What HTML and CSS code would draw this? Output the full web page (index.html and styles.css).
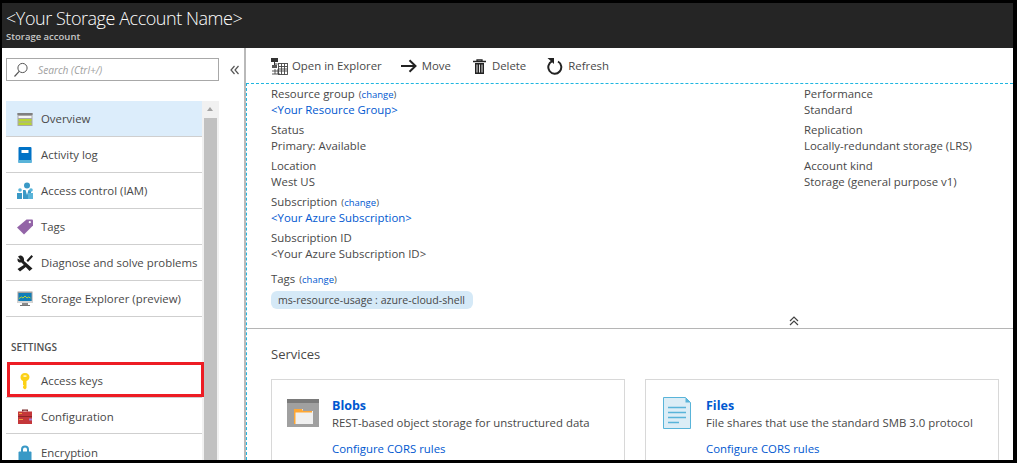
FILE: index.html
```html
<!DOCTYPE html>
<html lang="en">
<head>
    <meta charset="UTF-8">
    <title>Storage account</title>
    <link rel="stylesheet" href="styles.css">
</head>
<body>
    <div class="app">
        <header class="blade-header">
            <h1>&lt;Your Storage Account Name&gt;</h1>
            <div class="blade-type">Storage account</div>
        </header>
        <div class="blade-body">
            <aside class="sidebar">
                <div class="search-row">
                    <div class="search-box">
                        <svg class="search-icon" width="16" height="16" viewBox="0 0 16 16"><circle cx="9.5" cy="6" r="4.6" fill="none" stroke="#555" stroke-width="1"/><path d="M6.2 9.4 1.5 14.5" stroke="#555" stroke-width="1.2"/></svg>
                        <span>Search (Ctrl+/)</span>
                    </div>
                    <svg class="collapse" width="10" height="10" viewBox="0 0 10 10"><path d="M4.5 1 1 5l3.5 4M8.5 1 5 5l3.5 4" fill="none" stroke="#555" stroke-width="1.2"/></svg>
                </div>
                <div class="menu-wrap">
                    <nav class="menu">
                        <a class="menu-item active">
                            <svg width="18" height="18" viewBox="0 0 18 18"><rect x="1.500" y="3" width="15" height="13" fill="#a8a8a8"/><rect x="1.500" y="3" width="15" height="2" fill="#7f7f7f"/><rect x="2.500" y="6" width="13" height="2" fill="#f4f4f4"/><rect x="2.500" y="9" width="13" height="2.500" fill="#b8d432"/><rect x="2.500" y="12.500" width="13" height="2.500" fill="#b8d432"/></svg>
                            Overview
                        </a>
                        <a class="menu-item">
                            <svg width="18" height="18" viewBox="0 0 18 18"><rect x="2.500" y="1" width="13" height="16" rx="1" fill="#0072c6"/><rect x="2.500" y="14" width="13" height="3" fill="#59b4d9"/><rect x="5.500" y="4" width="7" height="3" fill="#fff"/></svg>
                            Activity log
                        </a>
                        <a class="menu-item">
                            <svg width="18" height="18" viewBox="0 0 18 18"><circle cx="11" cy="3.500" r="3" fill="#3999c6"/><path d="M7 8h8v9H7z" fill="#3999c6"/><circle cx="4" cy="8" r="1.800" fill="#59b4d9"/><path d="M1 11h5v6H1z" fill="#3999c6"/><circle cx="15" cy="8" r="1.800" fill="#59b4d9"/><path d="M12 11h5v6h-5z" fill="#59b4d9"/><path d="M9.500 8h3L11 13z" fill="#fff"/></svg>
                            Access control (IAM)
                        </a>
                        <a class="menu-item">
                            <svg width="18" height="18" viewBox="0 0 18 18"><path d="M10.500 1.500H16a1 1 0 0 1 1 1V7.500L8 16.500 1 9.500z" fill="#804998" opacity=".85"/><circle cx="13.800" cy="4.200" r="1.100" fill="#fff"/></svg>
                            Tags
                        </a>
                        <a class="menu-item">
                            <svg width="18" height="18" viewBox="0 0 18 18"><path d="M4 1.500 2 2.500 4.500 6 1.500 4.500C1 8 3.500 9 5.500 8.500L13.500 17l3-2.500L8 7C8.500 4 7 1.500 4 1.500z" fill="#1e1e1e"/><path d="M15.500 1 17 2.500 12 8l-1.500-1.500zM8.500 10.500l2 2L4 17.500 1.500 15z" fill="#1e1e1e"/></svg>
                            Diagnose and solve problems
                        </a>
                        <a class="menu-item">
                            <svg width="18" height="18" viewBox="0 0 18 18"><rect x="1.500" y="1.500" width="15" height="11.500" fill="#a0a0a0"/><rect x="2.500" y="3" width="13" height="8" fill="#0f7db8"/><path d="M3 8.500 5.500 7l1.500 1 2-2 2 2 1.500-1 2 1" fill="none" stroke="#b8d432" stroke-width="1"/><rect x="1.500" y="11" width="15" height="2" fill="#d5d5d5"/><path d="M6 13h6v2H6z" fill="#8a8a8a"/><rect x="4" y="15" width="10" height="1" fill="#777"/></svg>
                            Storage Explorer (preview)
                        </a>
                        <div class="menu-heading">SETTINGS</div>
                        <a class="menu-item highlighted">
                            <svg width="18" height="18" viewBox="0 0 18 18"><path d="M9 1c2.800 0 4.500 1.800 4.500 4S11.800 8.600 10.500 9v7L9 17.500 7 16v-1.500l1-.8-1-.8V9C5.700 8.600 4.500 7.200 4.500 5S6.200 1 9 1z" fill="#fcd116"/><rect x="7.500" y="3.500" width="3" height="1.200" fill="#fff"/></svg>
                            Access keys
                        </a>
                        <a class="menu-item">
                            <svg width="18" height="18" viewBox="0 0 18 18"><path d="M6 3.500V1.500h6v2h-1.300V2.800H7.300v.7z" fill="#7a2a2a"/><rect x="2" y="3.500" width="14" height="12.500" fill="#c4373a"/><rect x="2" y="8" width="14" height="1" fill="#8e2426"/><rect x="3" y="5" width="3" height="1" fill="#f29d38"/><rect x="3" y="11" width="4" height="1" fill="#f29d38"/><rect x="13" y="10.500" width="3" height="2" fill="#a97ed0"/></svg>
                            Configuration
                        </a>
                        <a class="menu-item">
                            <svg width="18" height="18" viewBox="0 0 18 18"><path d="M5 8V5.500a4 4 0 0 1 8 0V8h-2V5.500a2 2 0 0 0-4 0V8z" fill="#3999c6"/><rect x="2.500" y="7.500" width="13" height="10" rx="1" fill="#3999c6"/></svg>
                            Encryption
                        </a>
                    </nav>
                    <div class="scrollbar">
                        <div class="scroll-arrow"></div>
                        <div class="scroll-thumb"></div>
                    </div>
                </div>
            </aside>
            <main class="content">
                <div class="toolbar">
                    <a class="tool">
                        <svg width="17" height="17" viewBox="0 0 17 17"><rect x="0" y="0" width="7" height="4" fill="#333"/><path d="M3.500 4v4M3.500 6h3" stroke="#333" fill="none"/><rect x="1" y="7" width="5" height="3" fill="#555"/><g fill="none" stroke="#444" stroke-width=".9"><rect x="7.500" y="5.500" width="9" height="11"/><path d="M1 13h15.500M1 16h8M10.500 5.500v11M13.500 5.500v11M7.500 8.500h9M7.500 11h9M4 11v5M7 11v5"/></g></svg>
                        Open in Explorer
                    </a>
                    <a class="tool tool-move">
                        <svg width="16" height="14" viewBox="0 0 16 14"><path d="M0 7h14M8.500 1.200 14.500 7l-6 5.800" fill="none" stroke="#222" stroke-width="2"/></svg>
                        Move
                    </a>
                    <a class="tool tool-delete">
                        <svg width="13" height="15" viewBox="0 0 13 15"><path d="M0 2.500h13M4 2.500V.8h5v1.700" fill="none" stroke="#222" stroke-width="1.300"/><path d="M2 4h9v11H2z" fill="#222"/><path d="M4 5.500v8M6.500 5.500v8M9 5.500v8" stroke="#fff" stroke-width=".9"/></svg>
                        Delete
                    </a>
                    <a class="tool tool-refresh">
                        <svg width="16" height="17" viewBox="0 0 16 17"><path d="M5.200 3.200A6.500 6.500 0 1 0 11 3.500" fill="none" stroke="#222" stroke-width="2"/><path d="M.5 0h6.500v6z" fill="#222"/></svg>
                        Refresh
                    </a>
                </div>
                <div class="scroll-area">
                    <section class="essentials">
                        <div class="essentials-col">
                            <div class="field">
                                <div>Resource group <a class="change">(<span>change</span>)</a></div>
                                <a class="link">&lt;Your Resource Group&gt;</a>
                            </div>
                            <div class="field">
                                <div>Status</div>
                                <div>Primary: Available</div>
                            </div>
                            <div class="field">
                                <div>Location</div>
                                <div>West US</div>
                            </div>
                            <div class="field">
                                <div>Subscription <a class="change">(<span>change</span>)</a></div>
                                <a class="link">&lt;Your Azure Subscription&gt;</a>
                            </div>
                            <div class="field">
                                <div>Subscription ID</div>
                                <div>&lt;Your Azure Subscription ID&gt;</div>
                            </div>
                            <div class="field field-tags">
                                <div>Tags <a class="change">(<span>change</span>)</a></div>
                                <span class="tag-pill">ms-resource-usage : azure-cloud-shell</span>
                            </div>
                        </div>
                        <div class="essentials-col right">
                            <div class="field">
                                <div>Performance</div>
                                <div>Standard</div>
                            </div>
                            <div class="field">
                                <div>Replication</div>
                                <div>Locally-redundant storage (LRS)</div>
                            </div>
                            <div class="field">
                                <div>Account kind</div>
                                <div>Storage (general purpose v1)</div>
                            </div>
                        </div>
                    </section>
                    <div class="collapse-row">
                        <svg width="10" height="10" viewBox="0 0 10 10"><path d="M1 5 5 1l4 4M1 9l4-4 4 4" fill="none" stroke="#444" stroke-width="1.200"/></svg>
                    </div>
                    <section class="services">
                        <h2>Services</h2>
                        <div class="service-grid">
                            <div class="service-card">
                                <div class="service-icon">
                                    <svg width="32" height="28" viewBox="0 0 32 28"><rect width="32" height="28" fill="#a0a0a0"/><rect width="32" height="4" fill="#7a7a7a"/><path d="M7 10h9v2h10v13H7z" fill="#f0f0f0"/><path d="M7 10h8l1 2h9v1.500H8.500V25H7z" fill="#ffa733"/></svg>
                                </div>
                                <div class="service-text">
                                    <a class="service-title">Blobs</a>
                                    <div>REST-based object storage for unstructured data</div>
                                    <a class="link service-link">Configure CORS rules</a>
                                </div>
                            </div>
                            <div class="service-card">
                                <div class="service-icon">
                                    <svg width="28" height="32" viewBox="0 0 28 32"><path d="M.5.500h22l5 5v26H.5z" fill="#dcedf6" stroke="#59b4d9"/><path d="M22.500.500v5h5z" fill="#59b4d9"/><path d="M5 10.500h18M5 15.500h18M5 20.500h18M5 25.500h11" stroke="#59b4d9" stroke-width="1.300"/></svg>
                                </div>
                                <div class="service-text">
                                    <a class="service-title">Files</a>
                                    <div>File shares that use the standard SMB 3.0 protocol</div>
                                    <a class="link service-link">Configure CORS rules</a>
                                </div>
                            </div>
                        </div>
                    </section>
                </div>
            </main>
        </div>
    </div>
</body>
</html>
```

FILE: styles.css
```css
*, *::after, *::before { box-sizing: border-box; }
html, body { height: 100%; }
body {
    margin: 0;
    background: #000;
    font-family: "Open Sans", "Noto Sans", Arial, sans-serif;
    font-size: 11.4px;
    line-height: 16px;
    color: #484848;
    overflow: hidden;
}
a { cursor: pointer; }
.app {
    margin: 3px 4px 3px 2px;
    height: 457px;
    background: white;
    display: flex;
    flex-direction: column;
    overflow: hidden;
}

/* header */
.blade-header {
    height: 45px;
    flex: none;
    background: #252525;
    color: white;
    padding: 3px 0 0 4px;
}
.blade-header h1 {
    margin: 0;
    font-size: 18px;
    line-height: 24px;
    font-weight: 300;
    letter-spacing: -.45px;
}
.blade-type {
    font-size: 9.5px;
    line-height: 13px;
    font-weight: 600;
    color: #c8c8c8;
}
.blade-body {
    flex: 1;
    display: flex;
    min-height: 0;
}

/* left menu */
.sidebar {
    width: 244px;
    flex: none;
    border-right: 2px solid #b9b9b9;
    padding-left: 4px;
}
.search-row {
    display: flex;
    align-items: center;
    margin-top: 10px;
    height: 23px;
}
.search-box {
    width: 213px;
    height: 23px;
    border: 1px solid #a8a8a8;
    display: flex;
    align-items: center;
    padding-left: 6px;
    color: #a0a0a0;
    font-style: italic;
    font-size: 10.2px;
}
.search-icon { margin-right: 9px; }
.collapse { margin-left: 11px; }
.menu-wrap {
    display: flex;
    margin-top: 20px;
    width: 213px;
}
.menu { width: 196px; flex: none; }
.menu-item {
    display: flex;
    align-items: center;
    position: relative;
    height: 36px;
    padding: 1px 0 0 10px;
    gap: 7px;
    border-bottom: 1px solid #cfcfcf;
    white-space: nowrap;
}
.menu-heading ~ .menu-item { padding-top: 3px; }
.menu-item.active { background: #dcedfb; }
.menu-item svg { flex: none; margin-top: -1px; }
.menu-heading {
    height: 45px;
    padding: 22px 0 0 5px;
    font-size: 10px;
    line-height: 16px;
    font-weight: 600;
    color: #505050;
}
.highlighted::after {
    content: "";
    position: absolute;
    left: 1px;
    right: -2px;
    top: 0;
    height: 35px;
    border: 3px solid #ed1c24;
}
.scrollbar {
    width: 17px;
    background: #f1f1f1;
    padding: 0 2px;
    flex: none;
    display: flex;
    flex-direction: column;
}
.scroll-arrow {
    height: 17px;
    flex: none;
    position: relative;
}
.scroll-arrow::before {
    content: "";
    position: absolute;
    left: 3px;
    top: 6px;
    border-left: 3.500px solid transparent;
    border-right: 3.500px solid transparent;
    border-bottom: 4px solid #a3a3a3;
}
.scroll-thumb {
    flex: 1;
    background: #c1c1c1;
}

/* main content */
.content {
    flex: 1;
    min-width: 0;
    display: flex;
    flex-direction: column;
}
.toolbar {
    height: 35px;
    flex: none;
    display: flex;
    align-items: center;
    padding: 1px 0 0 25px;
}
.tool {
    display: flex;
    align-items: center;
    gap: 4px;
}
.tool-move { margin-left: 19px; gap: 5px; }
.tool-delete { margin-left: 22px; gap: 6px; }
.tool-refresh { margin-left: 21px; gap: 5px; }
.scroll-area {
    flex: 1;
    min-height: 0;
    border-top: 1px dashed #1fb6e0;
    border-left: 1px dashed #1fb6e0;
    overflow: hidden;
}
.essentials {
    display: flex;
    justify-content: space-between;
    padding: 2px 0 0 24px;
}
.essentials-col.right { width: 209px; }
.field { margin-bottom: 4px; }
.field > div, .field > .link { height: 16px; }
.field-tags { margin: 9px 0 0; }
.link { color: #0058d0; display: block; }
.change { font-size: 9.5px; color: #505050; margin-left: 1px; }
.change span { color: #0058d0; }
.tag-pill {
    display: block;
    width: 202px;
    height: 18px;
    margin-top: 4px;
    padding-left: 7px;
    background: #d5e9f7;
    border-radius: 6px;
    font-size: 10.6px;
    line-height: 18px;
    white-space: nowrap;
}
.collapse-row {
    height: 19px;
    display: flex;
    justify-content: flex-end;
    align-items: center;
    padding: 5px 214px 0 0;
}
.services {
    border-top: 1px solid #b5b5b5;
    padding: 15px 14px 0 24px;
}
.services h2 {
    margin: 0;
    font-size: 13px;
    line-height: 20px;
    font-weight: 400;
}
.service-grid {
    display: grid;
    grid-template-columns: 354px 354px;
    gap: 20px;
    margin-top: 15px;
}
.service-card {
    border: 1px solid #d8d8d8;
    height: 100px;
    display: flex;
    padding: 17px 0 0 15px;
}
.service-icon {
    width: 32px;
    height: 32px;
    flex: none;
    margin-right: 13px;
    display: flex;
    justify-content: center;
    align-items: center;
}
.service-title {
    display: block;
    color: #0058d0;
    font-size: 12.5px;
    line-height: 18px;
    font-weight: 700;
}
.service-link { margin-top: 10px; }
```
